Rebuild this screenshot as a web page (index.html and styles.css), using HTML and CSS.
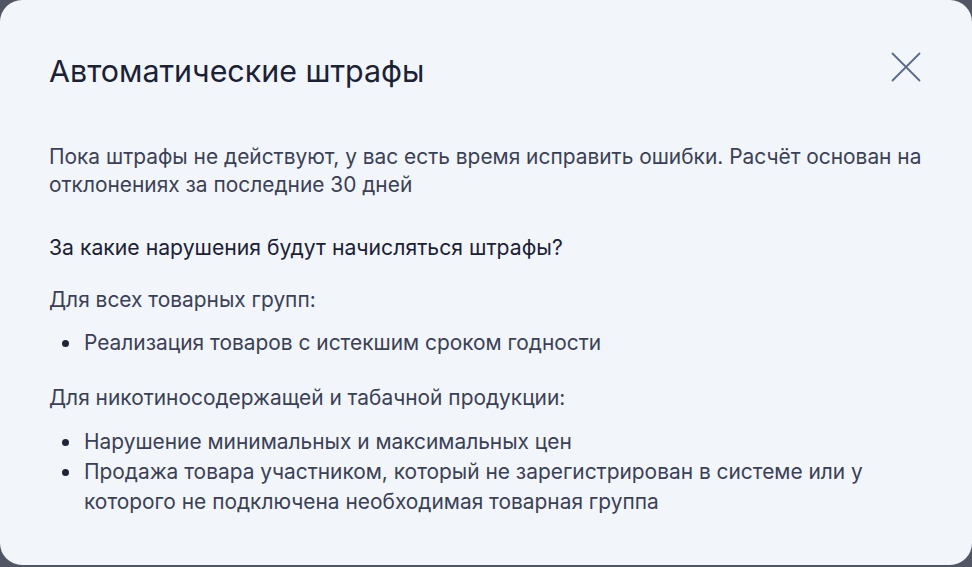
FILE: index.html
```html
<!DOCTYPE html>
<html lang="ru">
<head>
<meta charset="utf-8">
<link rel="stylesheet" href="styles.css">
</head>
<body>
<div class="modal">
  <div class="header">
    <h1 class="title">Автоматические штрафы</h1>
    <button class="close" aria-label="Закрыть">
      <svg width="30" height="30" viewBox="0 0 30 30"><path d="M1.5 1.5 L28.5 28.5 M28.5 1.5 L1.5 28.5" stroke="#5b6a8a" stroke-width="1.8" stroke-linecap="round" fill="none"/></svg>
    </button>
  </div>
  <p class="intro">Пока штрафы не действуют, у вас есть время исправить ошибки. Расчёт основан на отклонениях за последние 30 дней</p>
  <p class="question">За какие нарушения будут начисляться штрафы?</p>
  <p class="group">Для всех товарных групп:</p>
  <ul class="list">
    <li>Реализация товаров с истекшим сроком годности</li>
  </ul>
  <p class="group group-second">Для никотиносодержащей и табачной продукции:</p>
  <ul class="list list-second">
    <li>Нарушение минимальных и максимальных цен</li>
    <li>Продажа товара участником, который не зарегистрирован в системе или у которого не подключена необходимая товарная группа</li>
  </ul>
</div>
</body>
</html>
```
FILE: styles.css
```css
html, body {
  margin: 0;
  padding: 0;
  background: #505663;
  height: 100%;
}
body {
  font-family: Inter, "Noto Sans", sans-serif;
  color: #3a4157;
}
.modal {
  box-sizing: border-box;
  width: 972px;
  height: 565px;
  background: #f2f5f9;
  border-radius: 22px;
  padding: 53px 49px 0 49px;
}
.header {
  display: flex;
  justify-content: space-between;
  align-items: flex-start;
}
.title {
  margin: 0;
  font-size: 30.4px;
  font-weight: 400;
  line-height: 36px;
  color: #1b2236;
}
.close {
  border: 0;
  background: none;
  padding: 0;
  margin: -1px 2px 0 0;
  width: 30px;
  height: 30px;
  cursor: pointer;
}
.close svg { display: block; }
.intro {
  margin: 54px 0 0 0;
  font-size: 20.9px;
  line-height: 28px;
}
.question {
  margin: 34px 0 0 0;
  font-size: 21.2px;
  line-height: 28px;
  color: #1b2236;
}
.group {
  margin: 25px 0 0 0;
  font-size: 20.9px;
  line-height: 28px;
}
.group-second { margin-top: 26px; }
.list {
  margin: 14px 0 0 0;
  padding: 0 0 0 13px;
  list-style: none;
  font-size: 20.9px;
  line-height: 30px;
  max-width: 840px;
}
.list-second { margin-top: 15px; }
.list li {
  display: flex;
  align-items: flex-start;
  gap: 15px;
}
.list li::before {
  content: "";
  flex: none;
  width: 7px;
  height: 7px;
  border-radius: 50%;
  background: #1e2538;
  margin-top: 12px;
}
```
